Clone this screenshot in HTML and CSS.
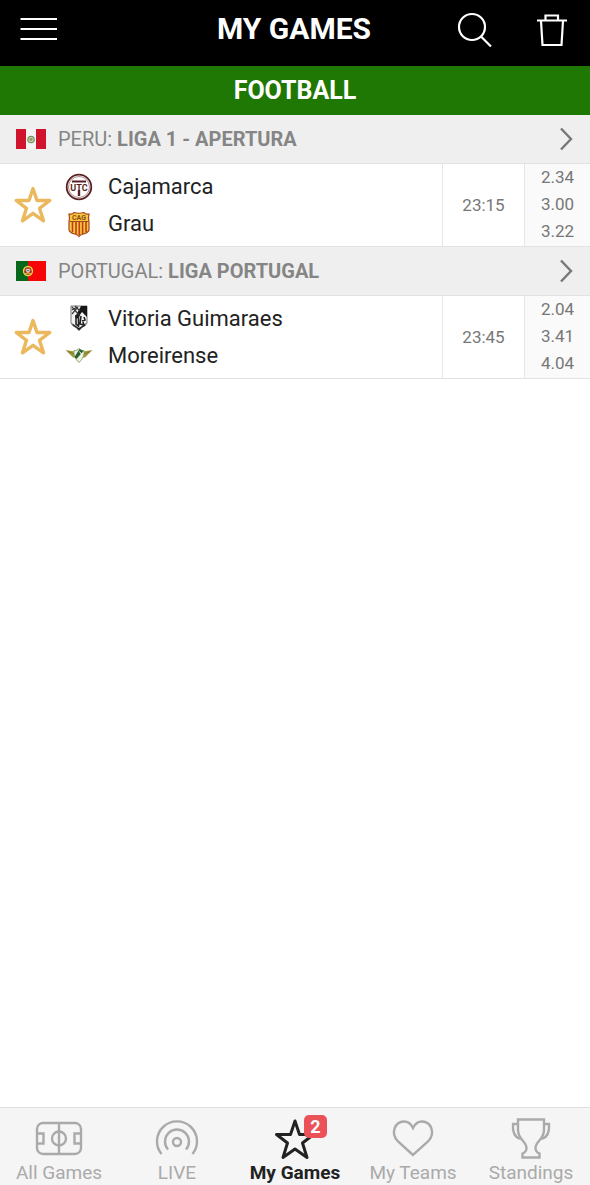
FILE: index.html
```html
<!DOCTYPE html>
<html lang="en">
<head>
  <meta charset="UTF-8">
  <title>My Games</title>
  <meta name="viewport" content="width=device-width, initial-scale=1.0">
  <link rel="stylesheet" href="styles.css">
</head>
<body>

  <header class="topbar">
    <div class="topbar-left">
      <button class="icon-btn" aria-label="Menu">
        <svg width="38" height="36" viewBox="0 0 38 36" fill="none" stroke="#fff" stroke-width="2.2">
          <path d="M0.5 8H37M0.5 18H37M0.5 28H37"/>
        </svg>
      </button>
    </div>
    <h1>MY GAMES</h1>
    <div class="topbar-right">
      <button class="icon-btn" aria-label="Search">
        <svg width="36" height="36" viewBox="0 0 36 36" fill="none" stroke="#fff" stroke-width="2.2">
          <circle cx="16" cy="16" r="13"/>
          <path d="M25 25.500L35 35.500"/>
        </svg>
      </button>
      <button class="icon-btn" aria-label="Delete">
        <svg width="32" height="36" viewBox="0 0 32 36" fill="none" stroke="#fff" stroke-width="2.2">
          <path d="M1 9.500H31M9.500 9V4.500H22V9M5 10L6.500 34H25.500L27 10"/>
        </svg>
      </button>
    </div>
  </header>

  <main>
    <h2 class="sport">FOOTBALL</h2>

    <section>
      <a class="league" href="#peru">
        <svg class="flag" width="30" height="20" viewBox="0 0 30 20">
          <rect width="30" height="20" fill="#f6f4f2"/>
          <rect width="10" height="20" fill="#d0142c"/>
          <rect x="20" width="10" height="20" fill="#d0142c"/>
          <circle cx="15" cy="10.500" r="3.200" fill="#d5dcb8" stroke="#6f9060" stroke-width="1.200"/>
          <path d="M13.500 9h3v2.500q-1.500 1.500-3 0z" fill="#9c9a68"/>
        </svg>
        <span class="league-name">PERU: <b>LIGA 1 - APERTURA</b></span>
        <svg class="chevron" width="14" height="24" viewBox="0 0 14 24"><path d="M2 1.500L12 12L2 22.500"/></svg>
      </a>
      <div class="match">
        <button class="fav" aria-label="Remove Cajamarca - Grau from my games">
          <svg width="40" height="40" viewBox="0 0 40 40"><path d="M20 3.500L24 15.500H36.800L26.500 23.300L30.500 35.800L20 28.300L9.500 35.800L13.500 23.300L3.200 15.500H16Z"/></svg>
        </button>
        <div class="teams">
          <div class="team">
            <svg width="28" height="28" viewBox="0 0 28 28">
              <circle cx="14" cy="14" r="12.300" fill="#fff" stroke="#5a1f22" stroke-width="1.800"/>
              <circle cx="14" cy="14" r="10.500" fill="none" stroke="#8a5a5a" stroke-width="0.700"/>
              <path d="M7 8.500H21" stroke="#5a1f22" stroke-width="2"/>
              <path d="M14 17V23" stroke="#5a1f22" stroke-width="2.400"/>
              <text x="14" y="17.500" text-anchor="middle" font-size="9" font-weight="700" fill="#5a1f22">UTC</text>
            </svg>
            <span>Cajamarca</span>
          </div>
          <div class="team">
            <svg width="28" height="28" viewBox="0 0 28 28">
              <path d="M4 4Q8 4.500 9 2.500Q14 4 19 2.500Q20 4.500 24 4Q23 8 24 12L24 20Q23 23 18 24Q15 25 14 26.500Q13 25 10 24Q5 23 4 20L4 12Q5 8 4 4Z" fill="#f8c83c" stroke="#a8451e" stroke-width="1.200"/>
              <path d="M7.500 12V22M11 12V24M14.300 12V25M17.600 12V24M21 12V22" stroke="#bf3d1d" stroke-width="1.600"/>
              <path d="M4.500 11.500H23.500" stroke="#a8451e"/>
              <text x="14" y="10" text-anchor="middle" font-size="7" font-weight="700" fill="#8a4a18">CAG</text>
            </svg>
            <span>Grau</span>
          </div>
        </div>
        <time class="time">23:15</time>
        <div class="odds"><span>2.34</span><span>3.00</span><span>3.22</span></div>
      </div>
    </section>

    <section>
      <a class="league" href="#portugal">
        <svg class="flag" width="30" height="20" viewBox="0 0 30 20">
          <rect width="30" height="20" fill="#f50505"/>
          <rect width="12" height="20" fill="#07671b"/>
          <circle cx="12" cy="10" r="4.500" fill="#8a3a14" stroke="#ecd84a" stroke-width="1.300"/>
          <path d="M7.500 8.500Q12 11 16.500 8.500M8 12.500H16" fill="none" stroke="#ecd84a" stroke-width="0.700"/>
          <path d="M10 7.500h4v3.500q-2 2.500-4 0z" fill="#fff" stroke="#d52a1c" stroke-width="0.800"/>
          <path d="M12 8.300v2.700M11 9.500h2" stroke="#335a9c" stroke-width="0.700"/>
        </svg>
        <span class="league-name">PORTUGAL: <b>LIGA PORTUGAL</b></span>
        <svg class="chevron" width="14" height="24" viewBox="0 0 14 24"><path d="M2 1.500L12 12L2 22.500"/></svg>
      </a>
      <div class="match">
        <button class="fav" aria-label="Remove Vitoria Guimaraes - Moreirense from my games">
          <svg width="40" height="40" viewBox="0 0 40 40"><path d="M20 3.500L24 15.500H36.800L26.500 23.300L30.500 35.800L20 28.300L9.500 35.800L13.500 23.300L3.200 15.500H16Z"/></svg>
        </button>
        <div class="teams">
          <div class="team">
            <svg width="28" height="28" viewBox="0 0 28 28">
              <path d="M6 1H22V18Q21 21 17 22.500L14 25.500L11 22.500Q7 21 6 18Z" fill="#f4f4f4" stroke="#555" stroke-width="0.800"/>
              <path d="M16 1H22V12L17 7L12 14L10 12Z" fill="#171717"/>
              <path d="M7 2L15 11M13 2L7 9M7 5L12 2M10 1L15 6" stroke="#3c3c3c" stroke-width="1.200"/>
              <path d="M11 10V19L13.500 21V10M16 11L15 19L19 20L18 17M19 12L20 15L17 16" fill="none" stroke="#222" stroke-width="1.600"/>
              <path d="M6.500 18Q10 20 14 23Q18 20 21.500 18Q20 21 17 22.500L14 25.500L11 22.500Q8 21.500 6.500 18Z" fill="#222"/>
            </svg>
            <span>Vitoria Guimaraes</span>
          </div>
          <div class="team">
            <svg width="28" height="28" viewBox="0 0 28 28">
              <path d="M0.500 8L10 9.500L11 15.500H8Z" fill="#a39a3c"/>
              <path d="M27.500 8L18 9.500L17 15.500H20Z" fill="#a39a3c"/>
              <path d="M3 9.500L10 12.500M25 9.500L18 12.500" stroke="#77792c"/>
              <path d="M9 8.500Q12 9 14 6.500Q16 9 19 8.500Q20 15 14 20.500Q8 15 9 8.500Z" fill="#edf2e2" stroke="#75964e" stroke-width="0.800"/>
              <path d="M9.500 15L14.500 7L18.500 9L11.500 17Z" fill="#28602f"/>
              <path d="M14.500 9.500L17 13" stroke="#fff"/>
            </svg>
            <span>Moreirense</span>
          </div>
        </div>
        <time class="time">23:45</time>
        <div class="odds"><span>2.04</span><span>3.41</span><span>4.04</span></div>
      </div>
    </section>
  </main>

  <nav class="tabs">
    <a href="#all">
      <svg width="48" height="44" viewBox="0 0 48 44">
        <rect x="2" y="7" width="44" height="31" rx="6"/>
        <path d="M24 7V38M2 17.500H8.500V27.500H2M46 17.500H39.500V27.500H46"/>
        <circle cx="24" cy="22.500" r="7"/>
      </svg>
      <span>All Games</span>
    </a>
    <a href="#live">
      <svg width="48" height="44" viewBox="0 0 48 44">
        <circle cx="24" cy="26" r="4"/>
        <path d="M15 33.500A12 12 0 1 1 33 33.500M8.500 38A20 20 0 1 1 39.500 38"/>
      </svg>
      <span>LIVE</span>
    </a>
    <a class="active" href="#my-games">
      <svg width="48" height="44" viewBox="0 0 48 44">
        <path d="M24 5L28.500 18.500H42.500L31.500 27L36 41.500L24 33L12 41.500L16.500 27L5.500 18.500H19.500Z"/>
      </svg>
      <em class="badge">2</em>
      <span>My Games</span>
    </a>
    <a href="#my-teams">
      <svg width="48" height="44" viewBox="0 0 48 44">
        <path d="M24 39L9 25.500C1 17 6 5.500 15 5.500Q21 5.500 24 12Q27 5.500 33 5.500C42 5.500 47 17 39 25.500Z"/>
      </svg>
      <span>My Teams</span>
    </a>
    <a href="#standings">
      <svg width="48" height="44" viewBox="0 0 48 44">
        <path d="M11 3.500H37V14C37 24 28.500 25 28.500 32Q28.500 36 32.500 37.500V41.500H15.500V37.500Q19.500 36 19.500 32C19.500 25 11 24 11 14Z"/>
        <path d="M11 8H6Q5 20 13 23M37 8H42Q43 20 35 23"/>
      </svg>
      <span>Standings</span>
    </a>
  </nav>

</body>
</html>
```
FILE: styles.css
```css
* {
  box-sizing: border-box;
}

body {
  margin: 0;
  min-height: 100vh;
  display: flex;
  flex-direction: column;
  background: #fff;
  color: #222;
  font-family: Roboto, "Liberation Sans", sans-serif;
}

main {
  flex: 1;
}

a {
  color: inherit;
  text-decoration: none;
}

button {
  padding: 0;
  border: none;
  background: none;
  cursor: pointer;
}

svg {
  display: block;
  flex: none;
}

/* top bar */
.topbar {
  display: grid;
  grid-template-columns: 1fr auto 1fr;
  align-items: center;
  height: 66px;
  padding: 0 22px 8px 20px;
  background: #000;
  color: #fff;
}

.topbar-left,
.topbar-right {
  display: flex;
}

.topbar h1 {
  margin: 0;
  font-size: 30px;
  line-height: 36px;
  font-weight: 700;
}

.topbar-right {
  justify-content: flex-end;
  gap: 44px;
}

.sport {
  margin: 0;
  background: #1f7804;
  color: #fff;
  font-size: 25px;
  line-height: 49px;
  font-weight: 700;
  text-align: center;
}

/* league row */
.league {
  display: flex;
  align-items: center;
  height: 49px;
  padding: 0 17px 0 16px;
  background: #efefef;
  border-bottom: 1px solid #e2e2e2;
  color: #858585;
  font-size: 20px;
}

.league-name {
  flex: 1;
  margin-left: 12px;
}

.chevron {
  fill: none;
  stroke: #777;
  stroke-width: 2.4;
}

/* match row */
.match {
  display: grid;
  grid-template-columns: 65px 1fr 82px 66px;
  height: 83px;
  border-bottom: 1px solid #e2e2e2;
}

.fav {
  display: flex;
  align-items: center;
  justify-content: center;
}

.fav svg {
  fill: none;
  stroke: #ebb85e;
  stroke-width: 3.4;
  stroke-linejoin: round;
}

.teams {
  display: flex;
  flex-direction: column;
  justify-content: center;
}

.team {
  display: flex;
  align-items: center;
  gap: 15px;
  height: 37px;
  font-size: 22px;
}

.time,
.odds {
  border-left: 1px solid #e6e6e6;
  color: #777;
  font-size: 17px;
}

.time {
  display: flex;
  align-items: center;
  justify-content: center;
}

.odds {
  display: flex;
  flex-direction: column;
  align-items: center;
  background: #fafafa;
  line-height: 27px;
}

/* bottom tabs */
.tabs {
  display: grid;
  grid-template-columns: repeat(5, 1fr);
  height: 78px;
  background: #f5f5f5;
  border-top: 1px solid #dedede;
  color: #aaa;
}

.tabs a {
  position: relative;
  display: flex;
  flex-direction: column;
  align-items: center;
  padding-top: 8px;
  font-size: 19px;
  line-height: 26px;
}

.tabs svg {
  fill: none;
  stroke: currentColor;
  stroke-width: 2.4;
}

.tabs .active {
  color: #222;
  font-weight: 700;
}

.tabs .active svg {
  stroke-width: 3;
  stroke-linejoin: round;
}

.badge {
  position: absolute;
  top: 7px;
  left: calc(50% + 9px);
  width: 23px;
  border-radius: 5px;
  background: #ea5258;
  color: #fff;
  font-size: 18px;
  font-style: normal;
  line-height: 23px;
  text-align: center;
}
```
